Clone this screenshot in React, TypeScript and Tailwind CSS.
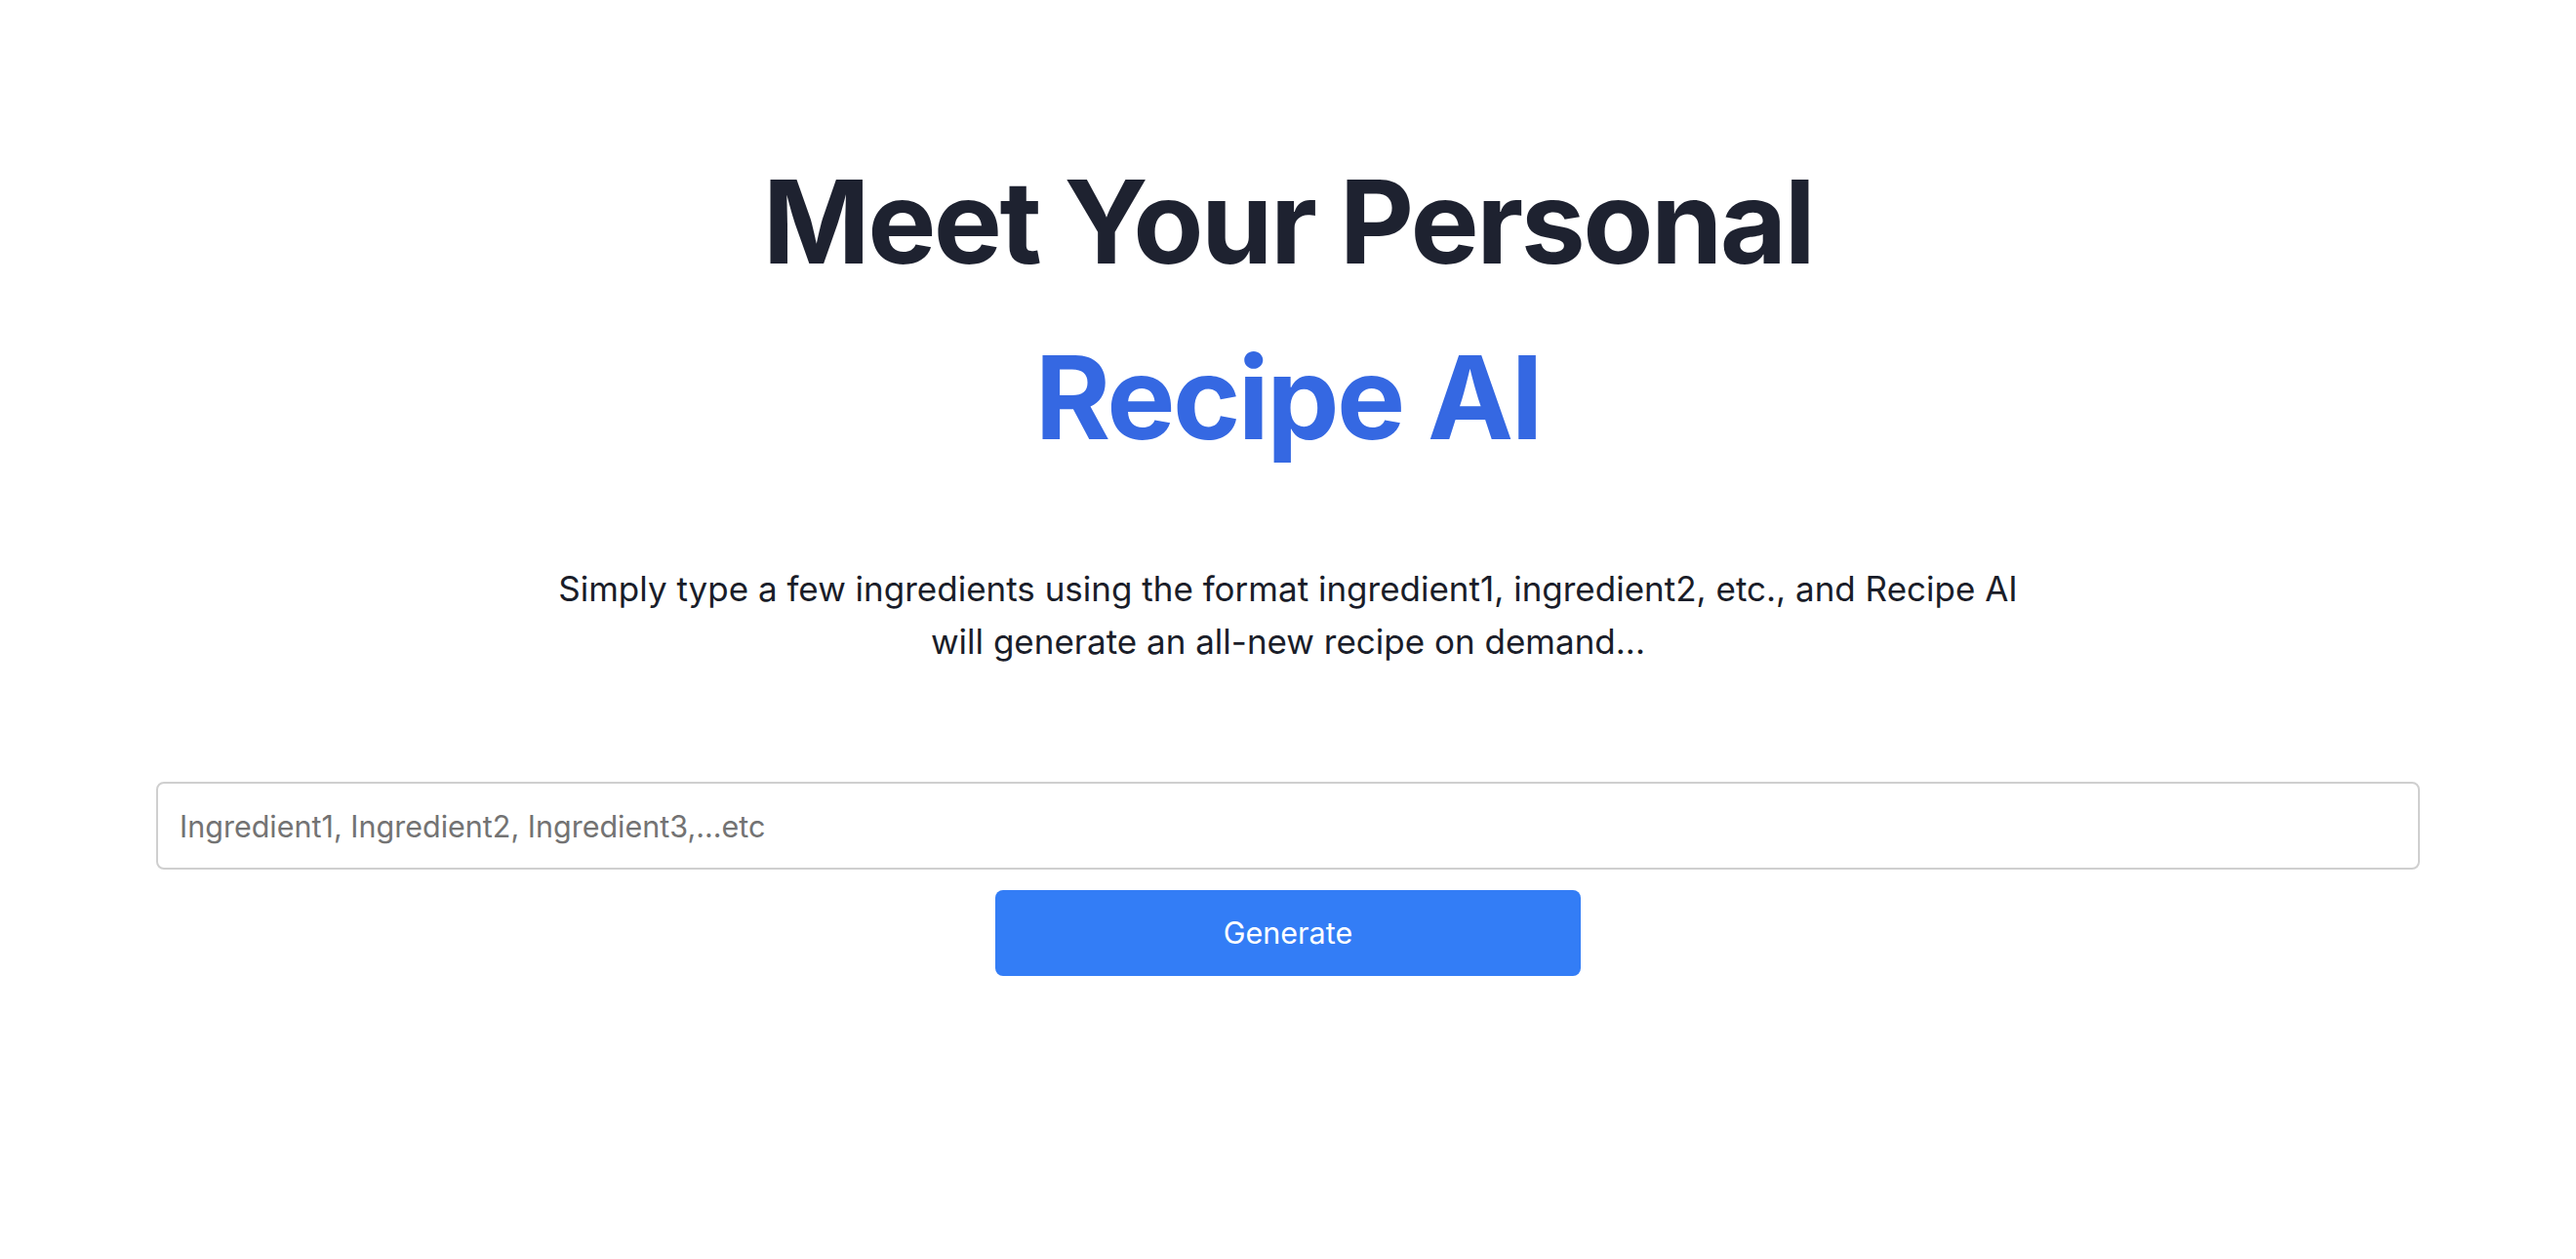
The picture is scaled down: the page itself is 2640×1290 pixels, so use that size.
import React, { useState } from "react";

export default function App() {
  const [ingredients, setIngredients] = useState<string>("");

  return (
    <div className="min-h-screen w-full bg-white font-['Inter','Noto_Sans',sans-serif] text-[#1f2330]">
      <main className="flex flex-col items-center px-[160px] pt-[137px]">
        {/* Hero heading */}
        <h1 className="text-center text-[118px] leading-[180px] font-bold tracking-[-0.022em] text-[#1e2230]">
          Meet Your Personal
          <br />
          <span className="text-[#3568e2]">Recipe AI</span>
        </h1>

        <p className="mt-[79px] max-w-[1540px] text-center text-[35px] leading-[54px] text-[#1a1d29]">
          Simply type a few ingredients using the format ingredient1, ingredient2, etc., and Recipe AI will
          generate an all-new recipe on demand...
        </p>

        {/* Input + action */}
        <div className="mt-[117px] flex w-full flex-col items-center gap-[21px]">
          <input
            type="text"
            value={ingredients}
            onChange={(e) => setIngredients(e.target.value)}
            placeholder="Ingredient1, Ingredient2, Ingredient3,...etc"
            className="h-[90px] w-full rounded-[8px] border-2 border-[#cfcfcf] px-[22px] text-[30.5px] text-[#1f2330] placeholder:text-[#737373] outline-none"
          />
          <button
            type="button"
            className="h-[88px] w-[600px] rounded-[8px] bg-[#337df6] text-[30.5px] text-white"
          >
            Generate
          </button>
        </div>
      </main>
    </div>
  );
}
